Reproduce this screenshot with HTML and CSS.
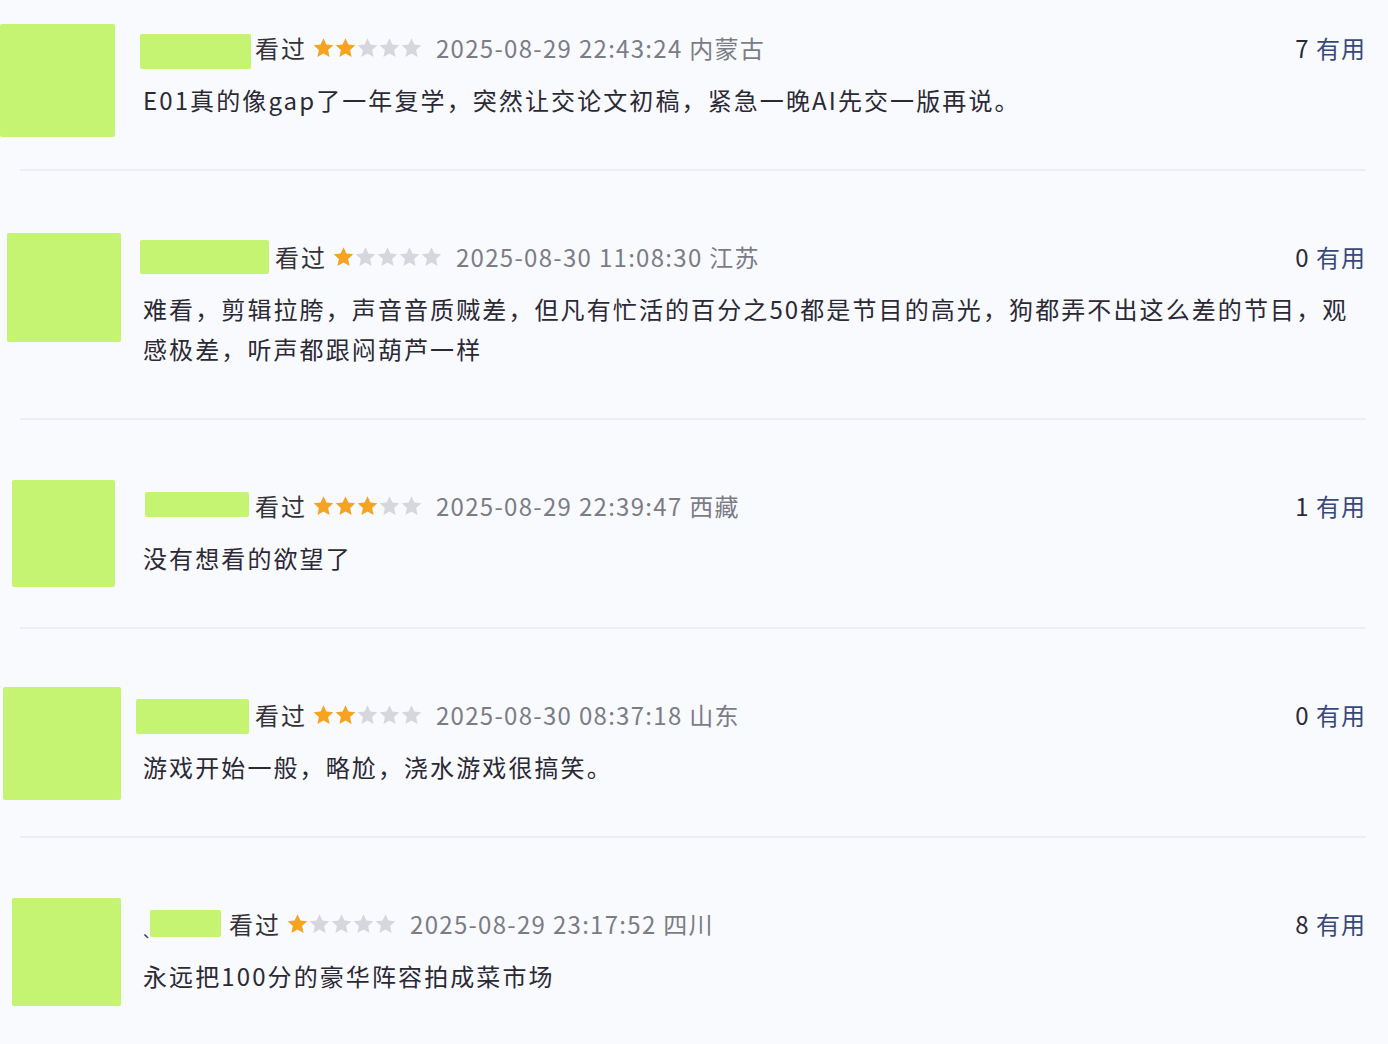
FILE: index.html
```html
<!DOCTYPE html>
<html lang="zh-CN">
<head>
<meta charset="utf-8">
<title>短评</title>
<link rel="stylesheet" href="styles.css">
</head>
<body>
<svg class="defs" width="0" height="0" aria-hidden="true">
  <defs>
    <symbol id="star" viewBox="0 0 20 20">
      <polygon points="10,0.3 12.9,6.6 19.8,7.3 14.6,12 16.1,18.9 10,15.4 3.9,18.9 5.4,12 0.2,7.3 7.1,6.6"/>
    </symbol>
  </defs>
</svg>
<div class="list">
  <div class="item item-1">
    <div class="avatar-col"><div class="avatar av-1"></div></div>
    <div class="body">
      <div class="head">
        <span class="name nm-1"></span>
        <span class="seen">看过</span>
        <span class="stars">
          <svg class="star on"><use href="#star"/></svg><svg class="star on"><use href="#star"/></svg><svg class="star"><use href="#star"/></svg><svg class="star"><use href="#star"/></svg><svg class="star"><use href="#star"/></svg>
        </span>
        <span class="time">2025-08-29 22:43:24 内蒙古</span>
        <span class="useful"><span class="num">7</span> 有用</span>
      </div>
      <p class="comment">E01真的像gap了一年复学，突然让交论文初稿，紧急一晚AI先交一版再说。</p>
    </div>
  </div>
  <div class="sep"></div>
  <div class="item">
    <div class="avatar-col"><div class="avatar av-2"></div></div>
    <div class="body">
      <div class="head">
        <span class="name nm-2"></span>
        <span class="seen">看过</span>
        <span class="stars">
          <svg class="star on"><use href="#star"/></svg><svg class="star"><use href="#star"/></svg><svg class="star"><use href="#star"/></svg><svg class="star"><use href="#star"/></svg><svg class="star"><use href="#star"/></svg>
        </span>
        <span class="time">2025-08-30 11:08:30 江苏</span>
        <span class="useful"><span class="num">0</span> 有用</span>
      </div>
      <p class="comment">难看，剪辑拉胯，声音音质贼差，但凡有忙活的百分之50都是节目的高光，狗都弄不出这么差的节目，观感极差，听声都跟闷葫芦一样</p>
    </div>
  </div>
  <div class="sep"></div>
  <div class="item">
    <div class="avatar-col"><div class="avatar av-3"></div></div>
    <div class="body">
      <div class="head">
        <span class="name nm-3"></span>
        <span class="seen">看过</span>
        <span class="stars">
          <svg class="star on"><use href="#star"/></svg><svg class="star on"><use href="#star"/></svg><svg class="star on"><use href="#star"/></svg><svg class="star"><use href="#star"/></svg><svg class="star"><use href="#star"/></svg>
        </span>
        <span class="time">2025-08-29 22:39:47 西藏</span>
        <span class="useful"><span class="num">1</span> 有用</span>
      </div>
      <p class="comment">没有想看的欲望了</p>
    </div>
  </div>
  <div class="sep"></div>
  <div class="item">
    <div class="avatar-col"><div class="avatar av-4"></div></div>
    <div class="body">
      <div class="head">
        <span class="name nm-4"></span>
        <span class="seen">看过</span>
        <span class="stars">
          <svg class="star on"><use href="#star"/></svg><svg class="star on"><use href="#star"/></svg><svg class="star"><use href="#star"/></svg><svg class="star"><use href="#star"/></svg><svg class="star"><use href="#star"/></svg>
        </span>
        <span class="time">2025-08-30 08:37:18 山东</span>
        <span class="useful"><span class="num">0</span> 有用</span>
      </div>
      <p class="comment">游戏开始一般，略尬，浇水游戏很搞笑。</p>
    </div>
  </div>
  <div class="sep"></div>
  <div class="item">
    <div class="avatar-col"><div class="avatar av-5"></div></div>
    <div class="body">
      <div class="head">
        <span class="mark">、</span>
        <span class="name nm-5"></span>
        <span class="seen">看过</span>
        <span class="stars">
          <svg class="star on"><use href="#star"/></svg><svg class="star"><use href="#star"/></svg><svg class="star"><use href="#star"/></svg><svg class="star"><use href="#star"/></svg><svg class="star"><use href="#star"/></svg>
        </span>
        <span class="time">2025-08-29 23:17:52 四川</span>
        <span class="useful"><span class="num">8</span> 有用</span>
      </div>
      <p class="comment">永远把100分的豪华阵容拍成菜市场</p>
    </div>
  </div>
</div>
</body>
</html>
```
FILE: styles.css
```css
html, body {
  margin: 0;
  padding: 0;
  background: #f9fafd;
}
body {
  font-family: "Noto Sans CJK SC", "Noto Sans", sans-serif;
  color: #2b2935;
  width: 1388px;
  height: 1044px;
  overflow: hidden;
}
.defs {
  position: absolute;
  width: 0;
  height: 0;
}
.list {
  padding-top: 30px;
}
.item {
  display: flex;
  padding: 68px 0 49px 0;
}
.item-1 {
  padding-top: 0;
}
.avatar-col {
  width: 143px;
  flex: none;
}
.avatar {
  background: #c4f471;
  border-radius: 2px;
}
.av-1 { width: 115px; height: 113px; margin: -6px 0 -40px 0; }
.av-2 { width: 114px; height: 109px; margin: -6px 0 -40px 7px; }
.av-3 { width: 103px; height: 107px; margin: -8px 0 -40px 12px; }
.av-4 { width: 118px; height: 113px; margin: -10px 0 -40px 3px; }
.av-5 { width: 109px; height: 108px; margin: -8px 0 -40px 12px; }
.body {
  flex: 1;
  min-width: 0;
  padding-right: 22px;
}
.head {
  display: flex;
  align-items: center;
  height: 36px;
  font-size: 24px;
  line-height: 36px;
  letter-spacing: 2px;
  white-space: nowrap;
}
.name {
  align-self: flex-start;
  background: #c4f471;
  border-radius: 2px;
}
.nm-1 { width: 111px; height: 35px; margin: 4px 4px 0 -3px; }
.nm-2 { width: 129px; height: 34px; margin: 1px 6px 0 -3px; }
.nm-3 { width: 104px; height: 25px; margin: 4px 6px 0 2px; }
.nm-4 { width: 113px; height: 35px; margin: 2px 6px 0 -7px; }
.nm-5 { width: 71px; height: 27px; margin: 4px 8px 0 0; }
.mark {
  font-size: 16px;
  letter-spacing: 0;
  color: #2f3d66;
  align-self: flex-end;
  line-height: 24px;
  margin-right: -9px;
}
.seen {
  color: #333238;
  margin-right: 6px;
}
.stars {
  display: flex;
  gap: 1px;
  margin-right: 14px;
}
.star {
  width: 21px;
  height: 20px;
  fill: #d6d7dc;
}
.star.on {
  fill: #f6a321;
}
.time {
  color: #7c7c86;
  letter-spacing: 1.3px;
}
.useful {
  margin-left: auto;
  color: #37497a;
  letter-spacing: 1px;
}
.useful .num {
  color: #2b2935;
}
.comment {
  margin: 14px 0 0 0;
  font-size: 24px;
  line-height: 40px;
  letter-spacing: 2.1px;
}
.sep {
  height: 2px;
  margin: 0 22px 0 20px;
  background: #eceef3;
}
```
